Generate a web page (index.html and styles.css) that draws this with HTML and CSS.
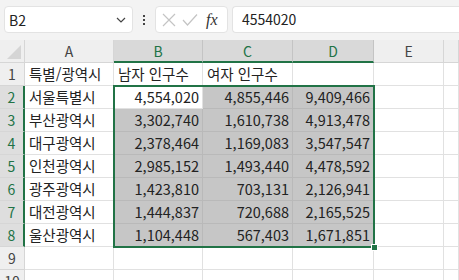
FILE: index.html
```html
<!DOCTYPE html>
<html lang="ko">
<head>
<meta charset="utf-8">
<link rel="stylesheet" href="styles.css">
</head>
<body>
<div class="toolbar">
  <div class="namebox">
    <span class="nb-text">B2</span>
    <svg class="chev" width="10" height="6" viewBox="0 0 10 6"><path d="M1 1 L5 5 L9 1" fill="none" stroke="#444" stroke-width="1.2"/></svg>
  </div>
  <div class="dots"><i></i><i></i><i></i></div>
  <div class="fxbox">
    <svg width="14" height="14" viewBox="0 0 14 14"><path d="M1 1 L13 13 M13 1 L1 13" stroke="#c4c4c4" stroke-width="1.2" fill="none"/></svg>
    <svg width="16" height="14" viewBox="0 0 16 14"><path d="M1 7 L5.5 12 L15 1.5" stroke="#c4c4c4" stroke-width="1.2" fill="none"/></svg>
    <span class="fx">fx</span>
  </div>
  <div class="formula">4554020</div>
</div>
<div class="sheet">
  <div class="grid">
    <div class="corner"><span class="tri"></span></div>
    <div class="ch">A</div><div class="ch sel">B</div><div class="ch sel">C</div><div class="ch sel">D</div><div class="ch">E</div><div class="ch last"></div>

    <div class="rh">1</div><div class="c">특별/광역시</div><div class="c">남자 인구수</div><div class="c">여자 인구수</div><div class="c"></div><div class="c"></div><div class="c"></div>

    <div class="rh sel">2</div><div class="c">서울특별시</div><div class="c n">4,554,020</div><div class="c n s">4,855,446</div><div class="c n s">9,409,466</div><div class="c"></div><div class="c"></div>
    <div class="rh sel">3</div><div class="c">부산광역시</div><div class="c n s">3,302,740</div><div class="c n s">1,610,738</div><div class="c n s">4,913,478</div><div class="c"></div><div class="c"></div>
    <div class="rh sel">4</div><div class="c">대구광역시</div><div class="c n s">2,378,464</div><div class="c n s">1,169,083</div><div class="c n s">3,547,547</div><div class="c"></div><div class="c"></div>
    <div class="rh sel">5</div><div class="c">인천광역시</div><div class="c n s">2,985,152</div><div class="c n s">1,493,440</div><div class="c n s">4,478,592</div><div class="c"></div><div class="c"></div>
    <div class="rh sel">6</div><div class="c">광주광역시</div><div class="c n s">1,423,810</div><div class="c n s">703,131</div><div class="c n s">2,126,941</div><div class="c"></div><div class="c"></div>
    <div class="rh sel">7</div><div class="c">대전광역시</div><div class="c n s">1,444,837</div><div class="c n s">720,688</div><div class="c n s">2,165,525</div><div class="c"></div><div class="c"></div>
    <div class="rh sel">8</div><div class="c">울산광역시</div><div class="c n s">1,104,448</div><div class="c n s">567,403</div><div class="c n s">1,671,851</div><div class="c"></div><div class="c"></div>
    <div class="rh">9</div><div class="c"></div><div class="c"></div><div class="c"></div><div class="c"></div><div class="c"></div><div class="c"></div>
    <div class="rh">10</div><div class="c"></div><div class="c"></div><div class="c"></div><div class="c"></div><div class="c"></div><div class="c"></div>
  </div>
  <div class="selection"><span class="handle"></span></div>
</div>
</body>
</html>
```
FILE: styles.css
```css
* { box-sizing: border-box; }
html, body { margin: 0; padding: 0; }
body {
  width: 459px;
  height: 280px;
  overflow: hidden;
  background: #ffffff;
  font-family: "Noto Sans CJK KR", "Noto Sans", sans-serif;
  color: #222;
}
.toolbar {
  height: 40px;
  background: #f3f3f3;
  display: flex;
  align-items: flex-start;
  padding: 6px 0 0 4px;
  gap: 0;
}
.namebox {
  width: 129px;
  height: 27px;
  background: #fff;
  border: 1px solid #e3e3e3;
  border-radius: 4px;
  display: flex;
  align-items: center;
  justify-content: space-between;
  padding: 0 6px 0 4px;
}
.nb-text { font-size: 14px; color: #222; }
.dots {
  width: 22px;
  height: 27px;
  display: flex;
  flex-direction: column;
  align-items: center;
  justify-content: center;
  gap: 2px;
}
.dots i { display: block; width: 2px; height: 2px; background: #444; }
.fxbox {
  width: 73px;
  height: 27px;
  background: #fff;
  border: 1px solid #e3e3e3;
  border-radius: 4px;
  display: flex;
  align-items: center;
  gap: 6px;
  padding: 0 0 0 6px;
}
.fx {
  font-family: "Liberation Serif", "DejaVu Serif", serif;
  font-style: italic;
  font-size: 16px;
  color: #333;
  margin-left: 2px;
}
.formula {
  flex: 1;
  margin-left: 4px;
  height: 27px;
  background: #fff;
  border: 1px solid #e3e3e3;
  border-right: none;
  border-radius: 4px 0 0 4px;
  font-size: 14px;
  line-height: 25px;
  padding-left: 9px;
  color: #222;
}
.sheet { position: relative; }
.grid {
  display: grid;
  grid-template-columns: 25px 89px 89px 90px 81px 70px 15px;
  grid-template-rows: repeat(11, 23px);
}
.corner {
  background: #efefef;
  border-right: 1px solid #d6d6d6;
  border-bottom: 1px solid #d6d6d6;
  position: relative;
}
.tri {
  position: absolute;
  right: 3px;
  bottom: 3px;
  width: 0;
  height: 0;
  border-left: 14px solid transparent;
  border-bottom: 14px solid #d5d5d5;
}
.ch {
  background: #efefef;
  border-right: 1px solid #d6d6d6;
  border-bottom: 1px solid #d6d6d6;
  text-align: center;
  font-size: 14px;
  line-height: 22px;
  color: #444;
}
.ch.sel {
  background: #d9d9d9;
  color: #217346;
  border-bottom: 2px solid #217346;
  border-right-color: #c4c4c4;
}
.rh {
  background: #efefef;
  border-right: 1px solid #d6d6d6;
  border-bottom: 1px solid #d6d6d6;
  text-align: center;
  font-size: 14px;
  line-height: 22px;
  color: #444;
}
.rh.sel {
  background: #dedede;
  color: #217346;
  border-right: 2px solid #217346;
}
.c {
  border-right: 1px solid #e1e1e1;
  border-bottom: 1px solid #e1e1e1;
  font-size: 14.5px;
  line-height: 22px;
  padding: 0 3px 0 4px;
  white-space: nowrap;
  overflow: hidden;
  color: #222;
}
.c.n { text-align: right; }
.c.s { background: #c6c6c6; border-color: #b9b9b9; }
.selection {
  position: absolute;
  left: 113px;
  top: 45px;
  width: 262px;
  height: 163px;
  border: 2px solid #217346;
  pointer-events: none;
}
.handle {
  position: absolute;
  right: -5px;
  bottom: -5px;
  width: 7px;
  height: 7px;
  background: #217346;
  border: 1px solid #fff;
}
```
